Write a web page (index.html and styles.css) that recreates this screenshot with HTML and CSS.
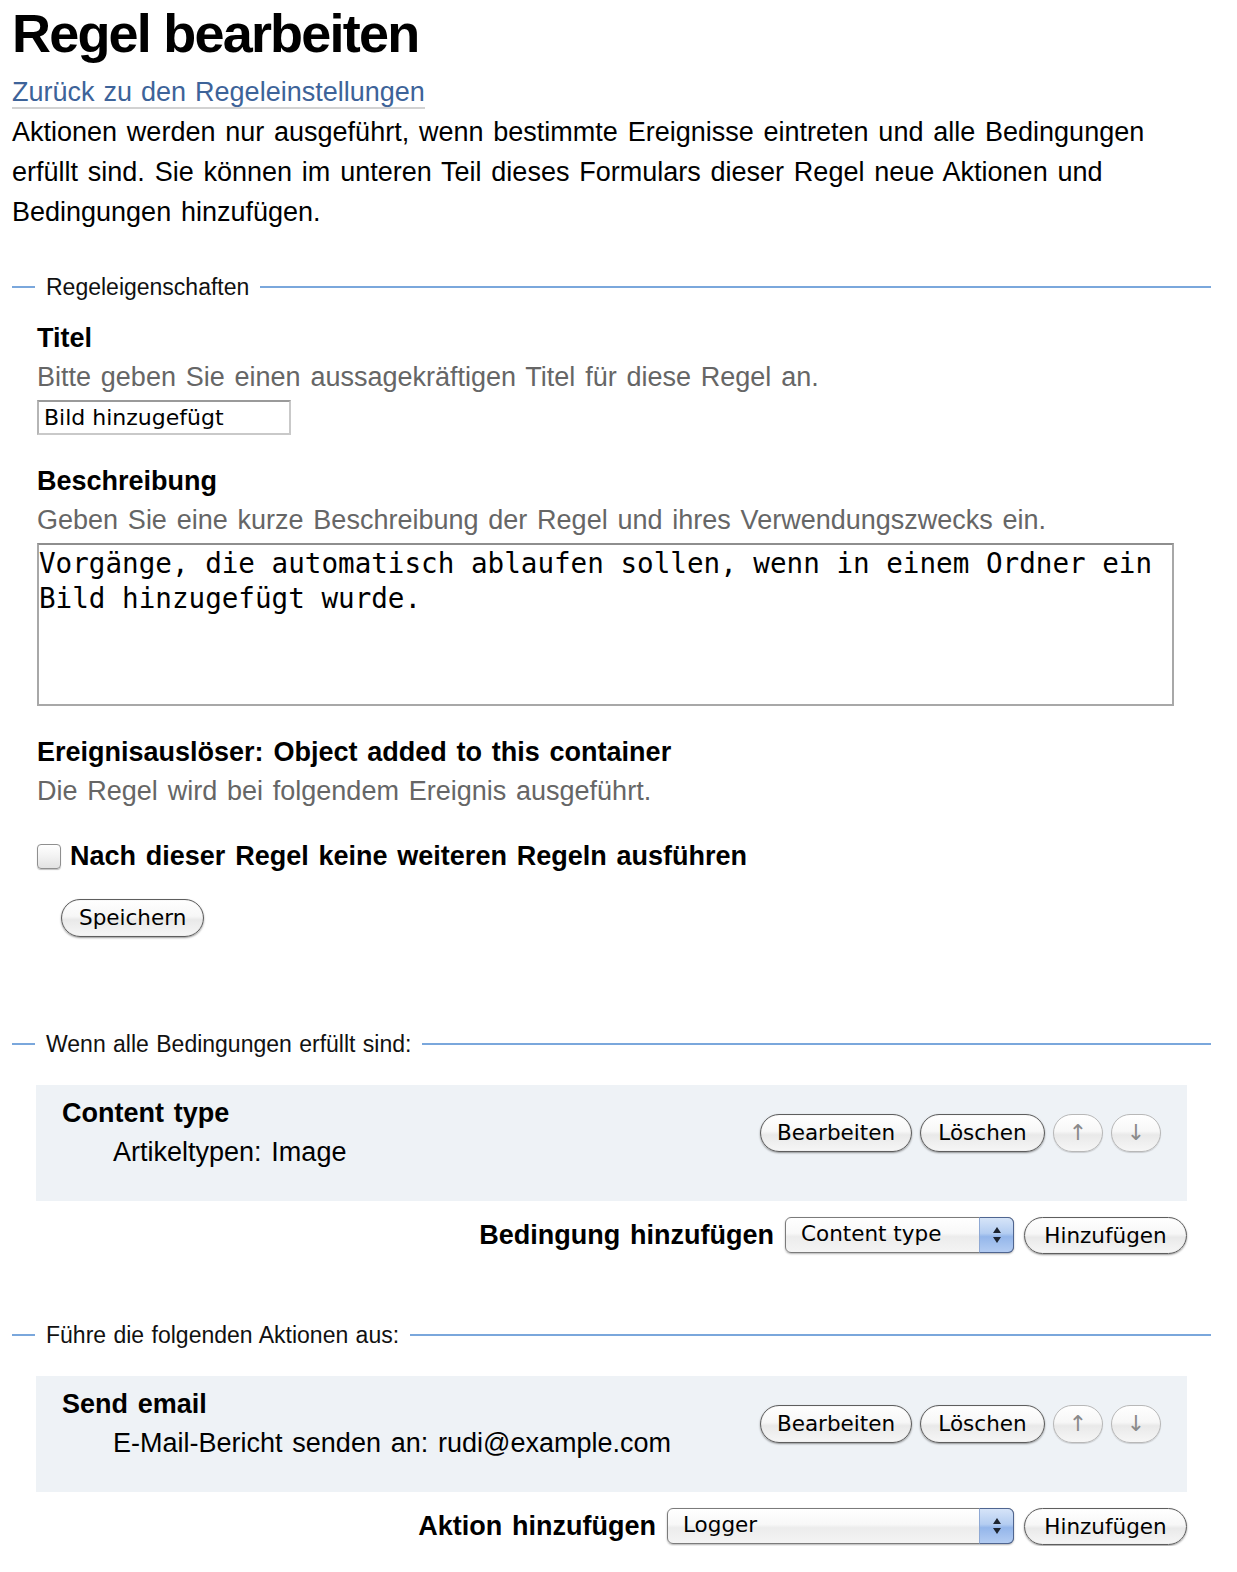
FILE: index.html
```html
<!DOCTYPE html>
<html lang="de">
<head>
<meta charset="utf-8">
<title>Regel bearbeiten</title>
<link rel="stylesheet" href="styles.css">
</head>
<body>
<div class="page">
  <h1 class="title">Regel bearbeiten</h1>
  <div class="backline"><a class="back" href="#">Zurück zu den Regeleinstellungen</a></div>
  <p class="intro">Aktionen werden nur ausgeführt, wenn bestimmte Ereignisse eintreten und alle Bedingungen erfüllt sind. Sie können im unteren Teil dieses Formulars dieser Regel neue Aktionen und Bedingungen hinzufügen.</p>

  <fieldset class="group group--props">
    <legend class="legend">Regeleigenschaften</legend>
    <div class="field">
      <label class="label" for="title">Titel</label>
      <div class="help">Bitte geben Sie einen aussagekräftigen Titel für diese Regel an.</div>
      <input class="text-input" id="title" type="text" value="Bild hinzugefügt">
    </div>
    <div class="field">
      <label class="label" for="desc">Beschreibung</label>
      <div class="help">Geben Sie eine kurze Beschreibung der Regel und ihres Verwendungszwecks ein.</div>
      <textarea class="textarea" id="desc">Vorgänge, die automatisch ablaufen sollen, wenn in einem Ordner ein Bild hinzugefügt wurde.</textarea>
    </div>
    <div class="field field--event">
      <div class="label">Ereignisauslöser: Object added to this container</div>
      <div class="help">Die Regel wird bei folgendem Ereignis ausgeführt.</div>
    </div>
    <div class="check-row">
      <input class="checkbox" id="stop" type="checkbox">
      <label class="check-label" for="stop">Nach dieser Regel keine weiteren Regeln ausführen</label>
    </div>
    <div class="actions">
      <button class="btn" type="button">Speichern</button>
    </div>
  </fieldset>

  <fieldset class="group">
    <legend class="legend">Wenn alle Bedingungen erfüllt sind:</legend>
    <div class="item">
      <div class="item-text">
        <div class="item-title">Content type</div>
        <div class="item-desc">Artikeltypen: Image</div>
      </div>
      <div class="item-buttons">
        <button class="btn btn--edit" type="button">Bearbeiten</button>
        <button class="btn btn--delete" type="button">Löschen</button>
        <button class="btn btn--arrow" type="button">↑</button>
        <button class="btn btn--arrow" type="button">↓</button>
      </div>
    </div>
    <div class="add-row">
      <span class="add-label">Bedingung hinzufügen</span>
      <span class="select-wrap select-wrap--short">
        <select class="select"><option>Content type</option></select>
        <span class="select-arrows"><svg width="12" height="20" viewBox="0 0 12 20"><path d="M6 2 L10 8 L2 8 Z" fill="#1d2430"/><path d="M2 12 L10 12 L6 18 Z" fill="#1d2430"/></svg></span>
      </span>
      <button class="btn btn--add" type="button">Hinzufügen</button>
    </div>
  </fieldset>

  <fieldset class="group">
    <legend class="legend">Führe die folgenden Aktionen aus:</legend>
    <div class="item">
      <div class="item-text">
        <div class="item-title">Send email</div>
        <div class="item-desc">E-Mail-Bericht senden an: rudi@example.com</div>
      </div>
      <div class="item-buttons">
        <button class="btn btn--edit" type="button">Bearbeiten</button>
        <button class="btn btn--delete" type="button">Löschen</button>
        <button class="btn btn--arrow" type="button">↑</button>
        <button class="btn btn--arrow" type="button">↓</button>
      </div>
    </div>
    <div class="add-row">
      <span class="add-label">Aktion hinzufügen</span>
      <span class="select-wrap select-wrap--long">
        <select class="select"><option>Logger</option></select>
        <span class="select-arrows"><svg width="12" height="20" viewBox="0 0 12 20"><path d="M6 2 L10 8 L2 8 Z" fill="#1d2430"/><path d="M2 12 L10 12 L6 18 Z" fill="#1d2430"/></svg></span>
      </span>
      <button class="btn btn--add" type="button">Hinzufügen</button>
    </div>
  </fieldset>
</div>
</body>
</html>
```

FILE: styles.css
```css
html, body {
  margin: 0;
  padding: 0;
  background: #fff;
}

body {
  font-family: "Liberation Sans", Arial, Helvetica, sans-serif;
  color: #000;
  font-size: 27px;
  line-height: 40px;
  word-spacing: 2.3px;
}

.page {
  width: 1199px;
  padding: 3px 0 0 12px;
}

.title {
  margin: 0 0 9px 0;
  font-size: 54px;
  line-height: 60px;
  font-weight: bold;
  letter-spacing: -1.8px;
  word-spacing: 0;
}

.backline {
  line-height: 40px;
}

.back {
  color: #3d6399;
  text-decoration: none;
  border-bottom: 2px solid #d2d2d2;
  word-spacing: 1.5px;
}

.intro {
  margin: 0;
  max-width: 1180px;
}

/* fieldsets */
.group {
  margin: 67px 0 0 0;
  padding: 0 24px 0 24px;
  border: none;
  border-top: 2px solid #7aa7dc;
  min-width: 0;
}

.group--props {
  margin-top: 42px;
  padding-left: 25px;
}

.legend {
  margin-left: -1px;
  padding: 0 11px 0 11px;
  font-size: 23px;
  line-height: 26px;
  color: #111;
  word-spacing: 1px;
}

.group--props .legend {
  margin-left: -2px;
}

.field {
  margin-bottom: 27px;
}

.group--props .field:first-of-type {
  margin-top: 19px;
}

.label {
  display: block;
  font-weight: bold;
  line-height: 39px;
}

.help {
  color: #666;
  line-height: 39px;
}

.text-input {
  display: block;
  box-sizing: border-box;
  width: 254px;
  height: 35px;
  margin-top: 3px;
  padding: 0 5px;
  border: 2px solid #c9c9c9;
  border-top-color: #9a9a9a;
  border-left-color: #b5b5b5;
  font-family: "DejaVu Sans", Verdana, sans-serif;
  font-size: 22px;
  color: #000;
  background: #fff;
  word-spacing: normal;
}

.textarea {
  display: block;
  box-sizing: border-box;
  width: 1137px;
  height: 163px;
  margin-top: 3px;
  padding: 1px 0 0 0;
  border: 2px solid #a8a8a8;
  border-top-color: #8e8e8e;
  font-family: "DejaVu Sans Mono", "Liberation Mono", monospace;
  font-size: 27.6px;
  line-height: 35px;
  color: #000;
  resize: none;
  overflow: hidden;
  word-spacing: normal;
}

.field--event {
  margin-bottom: 25px;
}

.check-row {
  display: flex;
  align-items: center;
  gap: 9px;
  height: 40px;
}

.checkbox {
  appearance: none;
  -webkit-appearance: none;
  margin: 0;
  width: 24px;
  height: 25px;
  border: 1px solid #8f8f8f;
  border-radius: 4px;
  background: linear-gradient(#ffffff, #f2f2f2 50%, #e2e2e2);
  box-shadow: 0 1px 1px rgba(0,0,0,0.25);
}

.check-label {
  font-weight: bold;
}

.actions {
  margin: 20px 0 27px 24px;
}

/* aqua-like buttons */
.btn {
  box-sizing: border-box;
  height: 38px;
  padding: 0 17px;
  border: 1px solid #5e5e5e;
  border-radius: 19px;
  background: linear-gradient(#ffffff, #f7f7f7 45%, #e9e9e9 55%, #f6f6f6);
  box-shadow: 0 1px 2px rgba(0,0,0,0.4), inset 0 0 1px rgba(0,0,0,0.25);
  font-family: "DejaVu Sans", Verdana, sans-serif;
  font-size: 21.5px;
  line-height: 36px;
  color: #000;
  word-spacing: normal;
  cursor: pointer;
}

.btn--edit {
  width: 152px;
  padding: 0;
}

.btn--delete {
  width: 125px;
  padding: 0;
}

.btn--arrow {
  width: 50px;
  padding: 0;
  border-color: #b8b8b8;
  color: #8a8a8a;
  box-shadow: 0 1px 1px rgba(0,0,0,0.15);
  font-size: 22px;
}

.btn--add {
  height: 37px;
  width: 163px;
  padding: 0;
}

/* items */
.item {
  display: flex;
  justify-content: space-between;
  align-items: flex-start;
  margin-top: 28px;
  padding: 8px 26px 29px 26px;
  background: #eef2f6;
}

.item-title {
  font-weight: bold;
  line-height: 40px;
}

.item-desc {
  padding-left: 51px;
  line-height: 39px;
}

.item-buttons {
  display: flex;
  gap: 8px;
  margin-top: 21px;
}

.add-row {
  display: flex;
  justify-content: flex-end;
  align-items: center;
  gap: 10px;
  margin-top: 14px;
}

.add-label {
  font-weight: bold;
  margin-right: 1px;
}

.select-wrap {
  position: relative;
  display: block;
  height: 36px;
  margin-top: -1px;
}

.select-wrap--short {
  width: 229px;
}

.select-wrap--long {
  width: 347px;
}

.select {
  appearance: none;
  -webkit-appearance: none;
  display: block;
  box-sizing: border-box;
  width: 100%;
  height: 36px;
  margin: 0;
  padding: 0 0 2px 15px;
  border: 1px solid #7b7b7b;
  border-radius: 6px;
  background: linear-gradient(#ffffff, #f8f8f8 45%, #ececec 55%, #f4f4f4);
  box-shadow: 0 1px 2px rgba(0,0,0,0.3);
  font-family: "DejaVu Sans", Verdana, sans-serif;
  font-size: 21.5px;
  color: #000;
  word-spacing: normal;
}

.select-arrows {
  position: absolute;
  top: 0;
  right: 0;
  box-sizing: border-box;
  width: 35px;
  height: 36px;
  display: flex;
  align-items: center;
  justify-content: center;
  border: 1px solid #4f6590;
  border-left-color: #8fa9d4;
  border-radius: 0 6px 6px 0;
  background: linear-gradient(#d6e4f8, #b4cdf1 45%, #94b6ea 55%, #b3ccf2);
}
```
